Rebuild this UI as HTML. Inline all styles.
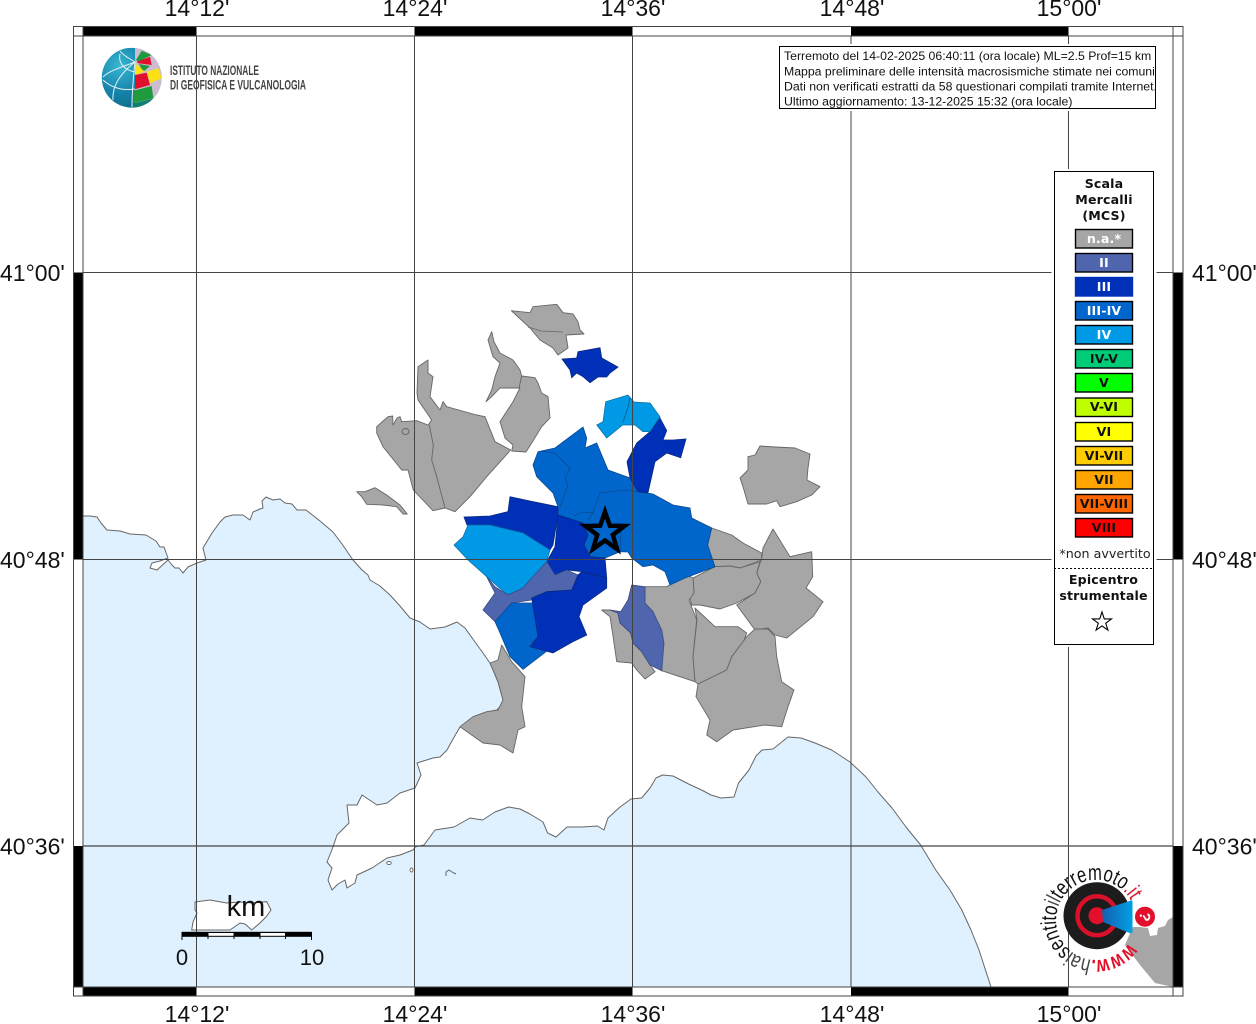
<!DOCTYPE html>
<html><head><meta charset="utf-8"><style>
html,body{margin:0;padding:0;background:#fff;width:1256px;height:1024px;overflow:hidden}
svg{display:block}
.ax{font:23px "Liberation Sans",sans-serif;fill:#111}
.l{font:bold 12.6px "DejaVu Sans",sans-serif;text-anchor:middle;letter-spacing:.15px}
.s{stroke:#000;stroke-width:1.4}
.g{fill:#a6a6a6;stroke:#666;stroke-width:.9;stroke-linejoin:round}
.d{fill:#0030b8;stroke:#0a2a80;stroke-width:.8}
.m{fill:#0066cc;stroke:#0a4a90;stroke-width:.8}
.w{fill:#0099e6;stroke:#0a6aa0;stroke-width:.7}
.t{fill:#4f66ae;stroke:#3a4c80;stroke-width:.8}
.i{fill:none;stroke:#2a3a66;stroke-width:.8}
</style></head><body>
<svg width="1256" height="1024" viewBox="0 0 1256 1024" xmlns="http://www.w3.org/2000/svg">
<defs>
<radialGradient id="gb" cx=".3" cy=".3" r=".8"><stop offset="0" stop-color="#38b6d2"/><stop offset=".6" stop-color="#1480a8"/><stop offset="1" stop-color="#0f6a80"/></radialGradient>
<linearGradient id="cone" x1="0" y1="0" x2="1" y2="0"><stop offset="0" stop-color="#1560b0"/><stop offset="1" stop-color="#00a0e6"/></linearGradient>
<clipPath id="gc"><circle cx="131.7" cy="77.7" r="30"/></clipPath>
<clipPath id="map"><rect x="83" y="36" width="1090" height="951"/></clipPath>
<path id="ring" d="M1128.8 942.9A40 40 0 1 1 1133.6 906.3"/>
</defs>
<g clip-path="url(#map)">
<path fill="#dff1ff" stroke="#666" stroke-width="1" stroke-linejoin="round" d="M83 516L90 516L97 517L101 523L107 530L120 531L130 534L146 535L156 541L160 547L164 547L168 558L160 561L152 563L150 568L157 570L168 560L172 565L175 568L179 568L183 573L188 567L197 563L206 560L203 548L212 533L220 522L225 517L233 515L243 515L250 520L253 512L260 509L263 508L262 501L266 497L273 500L280 499L285 503L292 504L297 510L306 510L320 521L333 532L342 544L353 560L362 570L368 575L370 580L380 586L390 595L400 606L410 618L420 622L430 629L445 627L457 622L465 628L475 642L483 653L490 663L493 670L498 682L503 700L503 703L497 710L487 712L473 717L460 727L453 739L447 750L440 757L433 758L417 763L421 775L415 788L400 793L387 803L377 805L368 799L362 795L357 805L347 805L349 823L337 835L333 847L327 862L332 868L328 880L332 890L338 884L345 880L347 888L355 883L357 875L372 868L387 858L400 855L413 850L415.5 846.7L424 845L435 830L454 827L470 818L482.600 820L495 812L508.600 807L520 809L530 814L543 822L547.600 833L556 837L567 827L582 827L597.500 826L604 830L608 818L620 807L631 799L641.700 798L650 788L656 778L662.500 775L673 776L688.600 784L701.600 790L711 795L721 798L734 797L738.500 783L749 770L756 756L762 750L773 749L788 737L801 738L815 743L831.700 750L850 762L866 777L878 792L892 808L906 827L920.600 845L935.800 870L950 890L961.800 910L971 930L979 950L991 987L83 987Z"/>
<path fill="#fff" stroke="#666" stroke-width="1" d="M195 902L210 900L226.700 903L240 902L253 903L266.700 901.700L271 910L266 917L260 923L251.700 930L245 924L240 923L230 930L191.700 930L193 922L197 913L195 910Z"/>
<g fill="#fff" stroke="#666" stroke-width=".9"><ellipse cx="389" cy="863" rx="2.300" ry="1.500"/><ellipse cx="411.500" cy="870" rx="1.500" ry="2"/></g>
<path fill="none" stroke="#666" stroke-width="1" d="M446 876L446 872L449 870L452 872L456 874"/>
<path class="g" d="M511.300 310.700L530 312.700L533 306.700L556.700 304.300L563 312.700L573 314L578 321.700L580 330L584 334L566 335L568 348L558 355L553 348L540 340L530 328Z"/>
<path class="i" style="stroke:#666" d="M528 327L541 331L563 332"/>
<path class="d" d="M562 359L576.700 358L578 351.700L600 347.700L601.700 358L618 367L610 373L606.700 377L598 377L590 382.700L583 376.700L576.700 373L571.700 377.700L570 370Z"/>
<path class="g" d="M488 340L491.700 331.700L494 341.700L500 353L513 360L520 370L521.700 376L535 377.700L538 383L541.700 393L548 396.700L550 418L541.700 426.700L531.700 443L526 452L511.700 451L513 445L505 438L500 421.700L513 401.700L520 388L500 388L491.700 396.700L486 401.700L491.700 390L495 376.700L500 363L493 356.700Z"/>
<path class="g" d="M418 366.700L428 360L428 373L433 376.700L430 396.700L440 410L443 401.700L446.700 406.700L476.700 415L485 416.700L495 441.700L510.700 450L486.700 476.700L470 496.700L455 511.700L445 508L433 510.700L413.300 490L408 470L401.700 470L383 446.700L376.700 433L376.700 426.700L388 416.700L392.700 416L393 425L397 418L400 416.700L401.700 421.700L416.700 420.700L428 425L431.700 420L418 400L417 393Z"/>
<path fill="none" stroke="#666" stroke-width=".9" d="M429.300 425L433.300 445L431.700 460L436.700 476.700L445 508M521.700 376L519 388"/>
<ellipse cx="405.500" cy="431.500" rx="3.500" ry="3" fill="#a6a6a6" stroke="#666"/>
<path class="g" d="M356.700 491.700L365 491.700L375 487.700L386.700 495L400 505L407.300 514L403 514L396.700 506.700L383 505L366.700 504.300L361.700 496.700Z"/>
<path class="g" d="M760 446L775 447L795 448L810 454L808 468L807 480L820 486.700L811.700 495L796.700 501.700L780 506.700L776.700 500.700L766.700 504L748 504L743 486.700L740 478L748 470L748 456.700L755 455Z"/>
<path class="g" d="M773 529L790 556.700L811.700 551.700L812.700 576.700L806 588L823 601.700L813 616.700L786.700 638L775 635L768 628L755 630L736.700 605L755 593L760.700 581.700L756.700 573L761.700 558L763 548Z"/>
<path class="g" d="M711.700 528L731.700 535L743 543L761.700 553L761.700 560L740 568L730 566L715 566.700L707 546.700Z"/>
<path class="g" d="M715 566.700L730 566L740 568L760 561.700L756.700 573L760.700 581.700L755 593L736.700 603L720 609L700 605L691.700 605L690 598L694 593L693 578Z"/>
<path class="g" d="M645 586.700L666.700 586.700L687 575L693 578L694 593L689 600L696.700 620L693 656.700L695 681.700L661.700 670.700L663 640L653 611.700L645 603Z"/>
<path class="g" d="M601.700 610L610 610L618 613L620 623L630.700 633L633 643L641.700 651.700L650 665L655 671.700L645 679L636.700 670L631.700 663L616.700 661.700L613.300 638L610 616.700Z"/>
<path class="t" d="M631.700 585L645 586.700L645 603L653 611.700L661.700 630L664 643L661.700 670.700L650 665L641.700 651.700L633 643L630.700 633L620 623L618 613L610 610L620.700 611.700L628 600Z"/>
<path class="g" d="M695 608L715 626.700L738 626.700L746.700 633L743 643L731.700 656.700L726.700 670L698 684L695 681.700L693 656.700L697 620Z"/>
<path class="g" d="M698 684L726.700 670L731.700 656.700L746.700 636.700L755 629L768 629L775 636.700L776.700 656.700L781.700 681.700L794 690L788 706.700L781.700 726.700L765 725L733 730L716.700 741.700L706.700 735L710 720L696 696.700Z"/>
<path class="g" d="M501.700 645L511.700 661.700L525 676.700L521.700 706.700L525 726.700L518 730L513 753L500 745L483 743L460 726.700L473 716.700L486.700 711.700L498 710L503 700L498 681.700L490 663L498 660Z"/>
<path class="m" d="M533 465L538 451.700L555 448L583 427L586.700 438L585 448L596.700 443L608 470L630 478L638 491.700L653 494L673 505L690 508L691.700 518L711.700 528L707.700 545L715 566.700L685 578L670 585L665 571.700L653 565L643 566.700L631.700 558L628 552L620 551.700L605 558L590 556.700L584 545L583 523L558 515L558 506.700L553 493L536.700 476.700Z"/>
<path class="d" d="M660 418L666.700 430.700L663 440L673 440L686 439L680.700 457.700L666.700 453L655 461.700L648 492.700L638 491.700L630 478L627 461.700L636.700 443L650 431.700Z"/>
<path class="w" d="M605.700 401.700L628 395L634 402L650 403L660 416.700L650 431.700L643 431.700L635 425L622.700 425L606.700 438L596.700 425L603 421.700Z"/>
<path class="i" style="stroke:#0a5a90" d="M630 398L628 407L622.700 423"/>
<path class="i" style="stroke:#0a4a90" d="M541.700 451L555 453.300L570 468.300L565 478L568 485L560 506.700M593 513L600 493L625 490L636.700 491.700M574 516L583 512L593 513L588 520M588 535L584 545L590 556.700M621 530L620 551"/>
<path class="d" d="M464 517L490 516L508 511.700L510 496.700L533 501.700L558 506.700L558 515L553 545L550 550L523 533L490 525L467 525Z"/>
<path class="d" d="M558 515L583 523L588 535L584 545L590 556.700L605 558L606.700 578L583 571.700L566.700 570L555 575L546.700 561.700L555 546.700Z"/>
<path class="w" d="M468 525L490 525L523 533L550 550L546.700 561.700L530 580L523 588L508 595L498 586.700L486.700 576.700L468 560L454 545L463 536.700Z"/>
<path class="t" d="M486.700 576.700L495 586.700L508 595L523 588L530 580L546.700 561.700L555 575L566.700 570L578 575L571.700 590L546.700 591.700L531.700 600L511.700 603L495 621.700L483 610L495 593Z"/>
<path class="m" d="M495 621.700L511.700 603L533 603L538 636.700L530 645L546 651.700L523 669.300L510 656.700L500 633Z"/>
<path class="d" d="M531.700 598L546.700 591.700L571.700 590L578 575L581.700 571.700L606.700 578L606.700 588L583 605L579 616.700L586.700 635L573 641.700L553 653L530 646.700L538 636.700Z"/>
<path fill="#a6a6a6" d="M1173 917L1168 920L1165 926L1158 928L1157 935L1150 936L1148 928L1141 927L1133 927L1128 938L1125 945L1140 965L1155 983L1173 987Z"/>
</g>
<g stroke="#444" stroke-width="1" fill="none">
<path d="M196.500 36V987M414.500 36V987M632.500 36V987M851 36V987M1068.500 36V987"/>
<path d="M83 272.500H1173M83 559.500H1173"/><path d="M83 846H1173" stroke-width="1.300"/>
</g>
<polygon points="605,511.800 609.800,525.700 624.500,526 612.800,534.900 617,549 605,540.500 593,549 597.200,534.900 585.500,526 600.200,525.700" fill="#0066cc" stroke="#000" stroke-width="4.500" stroke-linejoin="miter"/>
<g fill="#000">
<rect x="83" y="27" width="113.500" height="9"/><rect x="414.500" y="27" width="218" height="9"/><rect x="851" y="27" width="217.500" height="9"/>
<rect x="83" y="987" width="113.500" height="9"/><rect x="414.500" y="987" width="218" height="9"/><rect x="851" y="987" width="217.500" height="9"/>
<rect x="74" y="272.500" width="9" height="287"/><rect x="74" y="846" width="9" height="141"/>
<rect x="1173" y="272.500" width="9.500" height="287"/><rect x="1173" y="846" width="9.500" height="141"/>
</g>
<g stroke="#444" stroke-width="1" fill="none">
<rect x="73.500" y="26.500" width="1109.500" height="969.500"/>
<rect x="83" y="36" width="1090" height="951"/>
<path d="M73.500 36H83M1173 36H1183M73.500 987H83M1173 987H1183M83 26.500V36M1173 26.500V36M83 987V996M1173 987V996"/>
</g>
<g class="ax">
<text x="197" y="16" text-anchor="middle">14°12'</text><text x="415" y="16" text-anchor="middle">14°24'</text><text x="633" y="16" text-anchor="middle">14°36'</text><text x="852" y="16" text-anchor="middle">14°48'</text><text x="1069" y="16" text-anchor="middle">15°00'</text>
<text x="197" y="1022" text-anchor="middle">14°12'</text><text x="415" y="1022" text-anchor="middle">14°24'</text><text x="633" y="1022" text-anchor="middle">14°36'</text><text x="852" y="1022" text-anchor="middle">14°48'</text><text x="1069" y="1022" text-anchor="middle">15°00'</text>
<text x="0" y="281">41°00'</text><text x="0" y="568">40°48'</text><text x="0" y="854.500">40°36'</text>
<text x="1192" y="281">41°00'</text><text x="1192" y="568">40°48'</text><text x="1192" y="854.500">40°36'</text>
</g>
<g clip-path="url(#gc)">
<circle cx="131.700" cy="77.700" r="30" fill="url(#gb)"/>
<path fill="#cbbcd0" d="M135 47H165V110H135Z"/>
<path fill="#1f9a3c" d="M136 60L141.700 50.700L151.700 55L138.300 61.700Z"/>
<path fill="#e2102f" d="M136.700 61.700L150 56.700L151.700 65L138 63.300Z"/>
<path fill="#1f9a3c" d="M139 64L150 66L143 72Z"/>
<path fill="#fbe116" d="M135 63.300L145 71.700L135 75Z"/>
<path fill="#e2102f" d="M135 75L146.700 72.700L150 85L135 89.300Z"/>
<path fill="#fbe116" d="M146.700 71.700L158.300 68.300L161.700 78.300L150 83.300Z"/>
<path fill="#1f9a3c" d="M133.300 90.700L151.700 86L153.300 98.300L133.300 103.300Z"/>
<path fill="#0f8070" d="M133 103.500L153.500 98.500L150 104L133 110Z"/>
<path fill="none" stroke="#e4f2f6" stroke-width="1" d="M135 62C125 66 110 70 103 77M135 62C122 72 112 85 113 100M135 62C133 80 132 95 132 107M135 62C128 58 122 54 120 51M120 54C118 64 125 70 135 72M103 80C112 88 122 91 135 89"/>
</g>
<g fill="#444" font-family="'Liberation Sans Narrow','Liberation Sans',sans-serif" font-size="14" font-weight="bold">
<text x="170" y="75" textLength="89" lengthAdjust="spacingAndGlyphs">ISTITUTO NAZIONALE</text>
<text x="170" y="89.500" textLength="136" lengthAdjust="spacingAndGlyphs">DI GEOFISICA E VULCANOLOGIA</text>
</g>
<rect x="777" y="44" width="381.500" height="67" fill="#fff"/>
<rect x="779.500" y="46.500" width="376" height="62" fill="#fff" stroke="#000"/>
<svg x="780" y="47" width="375.500" height="61" viewBox="780 47 375.500 61" overflow="hidden">
<g font-family="'Liberation Sans',sans-serif" font-size="12.27" fill="#111">
<text x="784" y="60">Terremoto del 14-02-2025 06:40:11 (ora locale) ML=2.5 Prof=15 km</text>
<text x="784" y="75.500">Mappa preliminare delle intensità macrosismiche stimate nei comuni</text>
<text x="784" y="90.500">Dati non verificati estratti da 58 questionari compilati tramite Internet.</text>
<text x="784" y="105.500">Ultimo aggiornamento: 13-12-2025 15:32 (ora locale)</text>
</g></svg>
<rect x="1051.500" y="169" width="105" height="478" fill="#fff"/>
<rect x="1054.500" y="171.500" width="99" height="473" fill="#fff" stroke="#000"/>
<g fill="#111">
<text class="l" x="1104" y="188">Scala</text><text class="l" x="1104" y="204">Mercalli</text><text class="l" x="1104" y="220">(MCS)</text>
</g>
<g class="s">
<rect x="1075.500" y="229.500" width="57" height="18.500" fill="#a6a6a6"/>
<rect x="1075.500" y="253.500" width="57" height="18.500" fill="#4f66ae"/>
<rect x="1075.500" y="277.500" width="57" height="18.500" fill="#0030b8" stroke="#0030b8"/>
<rect x="1075.500" y="301.500" width="57" height="18.500" fill="#0066cc"/>
<rect x="1075.500" y="325.500" width="57" height="18.500" fill="#0099e6"/>
<rect x="1075.500" y="349.500" width="57" height="18.500" fill="#00cc77"/>
<rect x="1075.500" y="373.500" width="57" height="18.500" fill="#00ff00"/>
<rect x="1075.500" y="398" width="57" height="18.500" fill="#bfff00"/>
<rect x="1075.500" y="422.500" width="57" height="18.500" fill="#ffff00"/>
<rect x="1075.500" y="446.500" width="57" height="18.500" fill="#ffcc00"/>
<rect x="1075.500" y="470.500" width="57" height="18.500" fill="#ffa500"/>
<rect x="1075.500" y="494.500" width="57" height="18.500" fill="#ff6600"/>
<rect x="1075.500" y="518.500" width="57" height="18.500" fill="#ff0000"/>
</g>
<g fill="#fff">
<text class="l" x="1104" y="243">n.a.*</text><text class="l" x="1104" y="267">II</text><text class="l" x="1104" y="291">III</text><text class="l" x="1104" y="315">III-IV</text><text class="l" x="1104" y="339">IV</text>
</g>
<g fill="#111">
<text class="l" x="1104" y="363">IV-V</text><text class="l" x="1104" y="387">V</text><text class="l" x="1104" y="411">V-VI</text><text class="l" x="1104" y="436">VI</text><text class="l" x="1104" y="460">VI-VII</text><text class="l" x="1104" y="484">VII</text><text class="l" x="1104" y="508">VII-VIII</text><text class="l" x="1104" y="532">VIII</text>
</g>
<text x="1105" y="558" text-anchor="middle" font-family="'DejaVu Sans',sans-serif" font-size="12.700" fill="#222">*non avvertito</text>
<path d="M1054 568.500H1153.500" stroke="#000" stroke-dasharray="2 2" fill="none"/>
<text class="l" x="1103.500" y="584" fill="#111">Epicentro</text><text class="l" x="1103.500" y="600" fill="#111">strumentale</text>
<polygon points="1102,612 1104.300,618.900 1111.500,618.900 1105.700,623.200 1107.900,630.100 1102,625.900 1096.100,630.100 1098.300,623.200 1092.500,618.900 1099.700,618.900" fill="#fff" stroke="#000" stroke-width="1.100"/>
<rect x="182" y="931.800" width="129.500" height="5" fill="#000"/>
<rect x="208.200" y="933" width="25.500" height="2.800" fill="#fff"/><rect x="260" y="933" width="25.200" height="2.800" fill="#fff"/>
<path d="M182 932V940M208 932V939M234 932V939M260 932V939M285.500 932V939M311.500 932V940" stroke="#000" stroke-width="1" fill="none"/>
<text x="246" y="916" text-anchor="middle" font-family="'Liberation Sans',sans-serif" font-size="29" fill="#111">km</text>
<text x="182" y="965" text-anchor="middle" font-family="'Liberation Sans',sans-serif" font-size="22" fill="#111">0</text>
<text x="312" y="965" text-anchor="middle" font-family="'Liberation Sans',sans-serif" font-size="22" fill="#111">10</text>
<circle cx="1097" cy="915.700" r="33.500" fill="#1c1c1c"/>
<circle cx="1097" cy="915.700" r="19.500" fill="none" stroke="#d8102a" stroke-width="4.500"/>
<circle cx="1097" cy="915.700" r="8.500" fill="#e2102a"/>
<path d="M1102 910L1131 900.500Q1132.500 900 1132.500 902L1132.500 931Q1132.500 934 1129.500 933L1103 922Z" fill="url(#cone)"/>
<circle cx="1145" cy="916.700" r="10.500" fill="#e2102a" stroke="#fff" stroke-width="1"/>
<text x="1145" y="922" text-anchor="middle" font-family="'Liberation Sans',sans-serif" font-weight="bold" font-size="15" fill="#fff" transform="rotate(100 1145 916.700)">?</text>
<text font-family="'Liberation Sans',sans-serif" font-size="22" fill="#111"><textPath href="#ring" textLength="206" lengthAdjust="spacingAndGlyphs"><tspan fill="#e2102a" font-weight="bold">www.</tspan><tspan fill="#444">hai</tspan><tspan>sentito</tspan><tspan fill="#444">il</tspan><tspan>terremoto</tspan><tspan fill="#e2102a">.it</tspan></textPath></text>
</svg>
</body></html>
